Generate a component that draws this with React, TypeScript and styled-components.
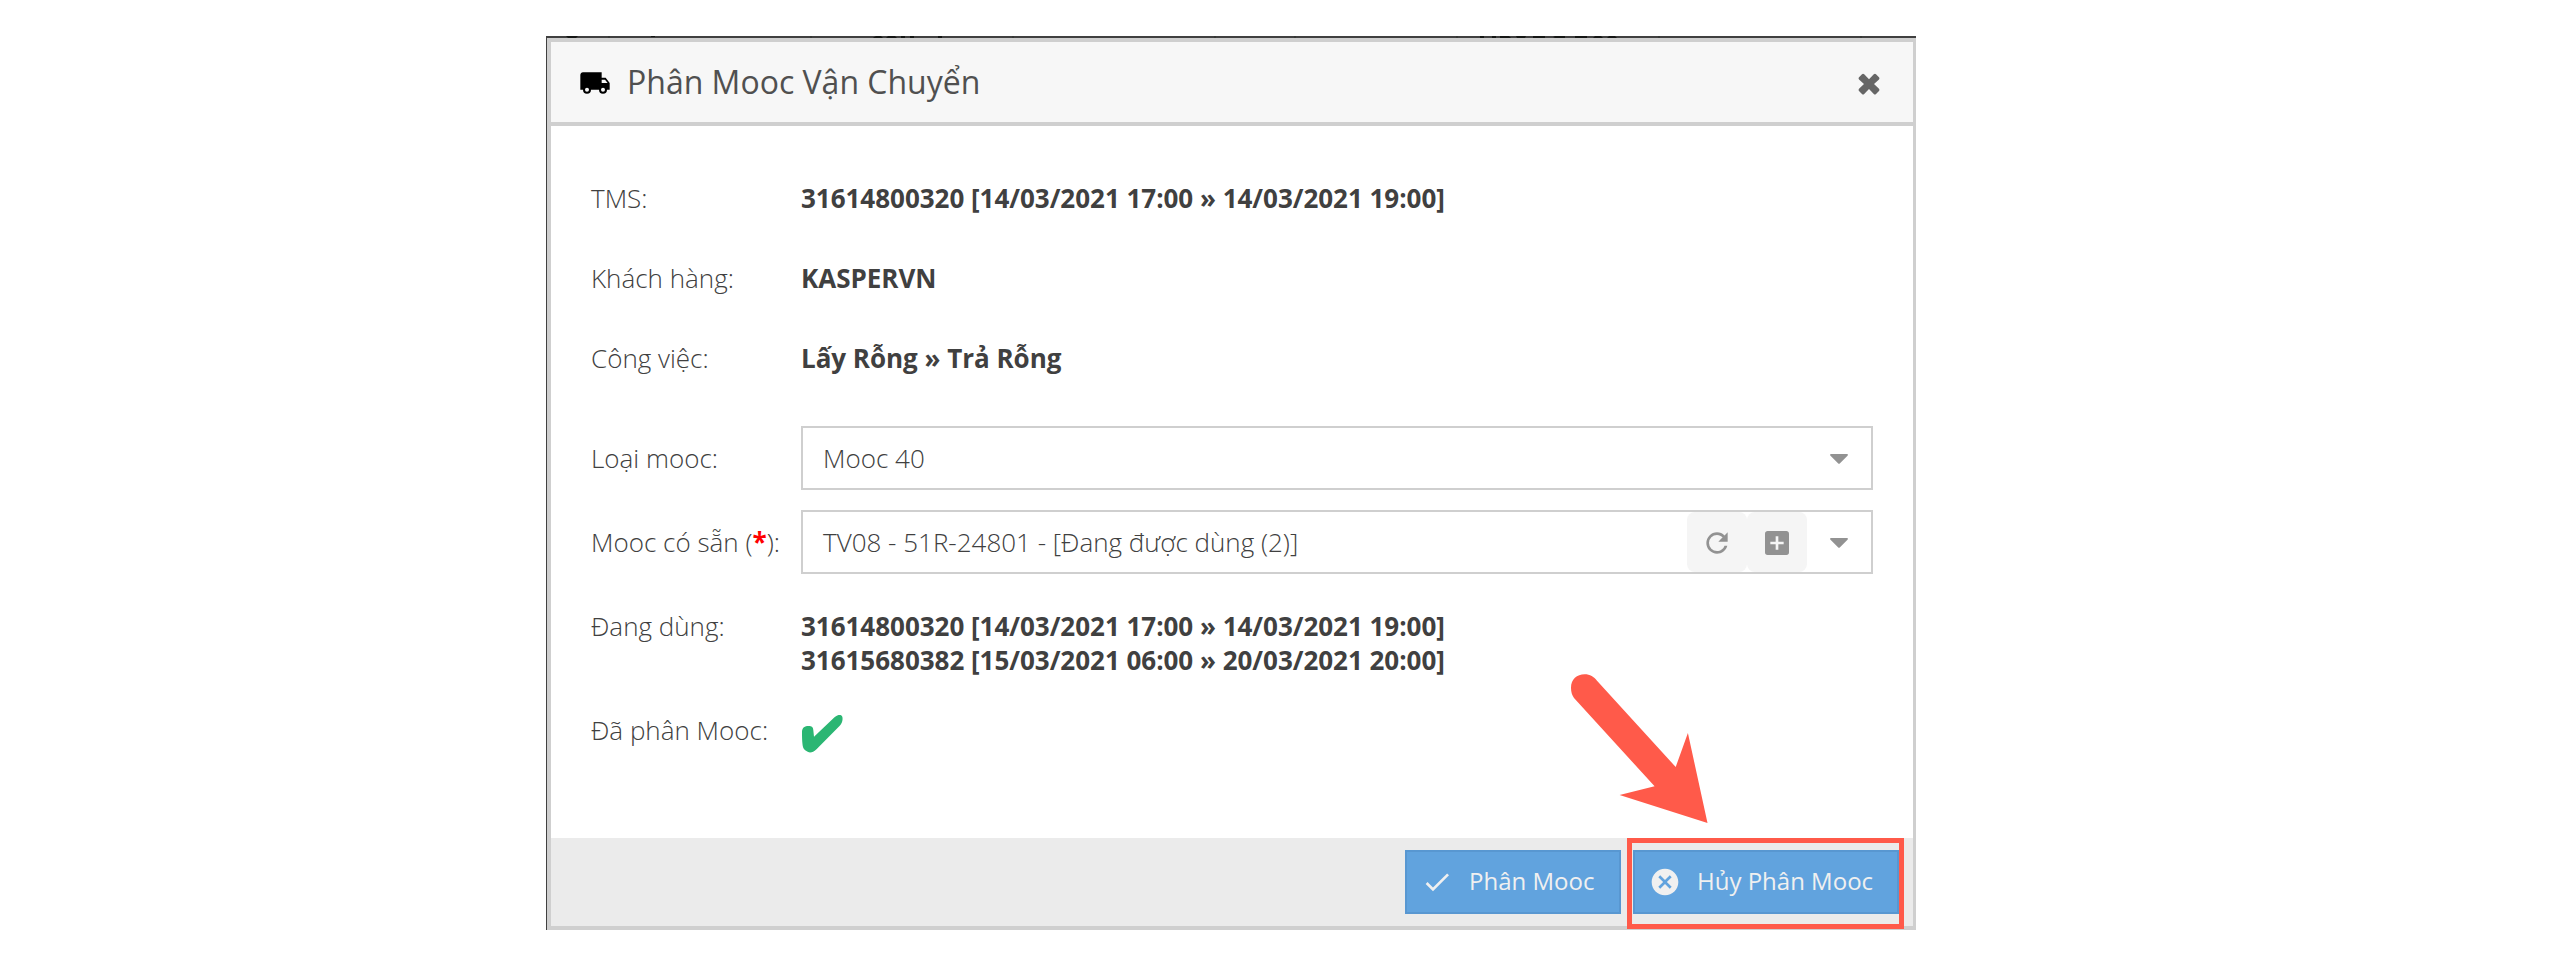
import React from "react";
import styled, { createGlobalStyle } from "styled-components";

const Global = createGlobalStyle`
  * { box-sizing: border-box; }
  body { margin: 0; background: #fff; font-family: "Open Sans", sans-serif; color: #404040; }
`;

const Page = styled.main`
  height: 962px;
  padding: 36px 0 0 546px;
  overflow: hidden;
`;

const Backdrop = styled.div`
  width: 1370px;
  height: 894px;
  padding: 0 0 0 1px;
  background: #404040;
`;

const Fragments = styled.svg`
  display: block;
  width: 1369px;
  height: 2px;
`;

const Dialog = styled.section`
  position: relative;
  height: 892px;
  display: flex;
  flex-direction: column;
  border: 4px solid #cfcfcf;
  border-right-width: 3px;
  background: #fff;
`;

const Header = styled.header`
  height: 84px;
  flex: none;
  display: flex;
  align-items: center;
  padding: 0 33px 0 28px;
  background: #f7f7f7;
  border-bottom: 4px solid #cfcfcf;
`;

const Title = styled.h1`
  flex: 1;
  margin: 0 0 0 16px;
  font-size: 32px;
  line-height: 44px;
  font-weight: 400;
  color: #505050;
`;

const Icon = styled.svg<{ $size?: number; $color?: string; $drop?: number }>`
  display: block;
  flex: none;
  width: ${(p) => p.$size ?? 32}px;
  height: ${(p) => p.$size ?? 32}px;
  margin-top: ${(p) => p.$drop ?? 0}px;
  fill: ${(p) => p.$color ?? "#929292"};
`;

const Body = styled.div`
  flex: 1;
  padding: 40px 40px 0;
`;

const Row = styled.div<{ $height: number }>`
  display: flex;
  height: ${(p) => p.$height}px;
  font-size: 26px;
  line-height: 34px;
`;

const Label = styled.div`
  width: 210px;
  flex: none;
  padding-top: 15px;
  font-weight: 300;
  white-space: nowrap;
`;

const Star = styled.span`
  color: #f00;
  font-weight: 700;
`;

const Value = styled.div`
  padding-top: 15px;
  font-weight: 700;
  letter-spacing: -0.025px;
  white-space: nowrap;
`;

const Select = styled.div`
  flex: 1;
  height: 64px;
  display: flex;
  align-items: center;
  border: 2px solid #cfcfcf;
  padding-left: 20px;
  font-weight: 300;
`;

const SelectText = styled.span`
  flex: 1;
`;

const Trigger = styled.span<{ $filled?: boolean }>`
  width: ${(p) => (p.$filled ? 60 : 64)}px;
  height: 60px;
  display: flex;
  align-items: center;
  justify-content: center;
  border-radius: 8px;
  background: ${(p) => (p.$filled ? "#f5f5f5" : "transparent")};
`;

const Footer = styled.footer`
  height: 88px;
  flex: none;
  display: flex;
  gap: 12px;
  padding: 12px 14px 0 0;
  justify-content: flex-end;
  background: #ebebeb;
`;

const Button = styled.button<{ $width: number }>`
  width: ${(p) => p.$width}px;
  height: 64px;
  display: flex;
  align-items: center;
  gap: 16px;
  padding: 0 0 0 14px;
  border: 2px solid #5897d1;
  background: #61a3de;
  color: #f0f0f0;
  font: 400 24px/32px "Open Sans", sans-serif;
  white-space: nowrap;
`;

const ButtonText = styled.span`
  padding-bottom: 2px;
`;

const Highlight = styled.div`
  position: absolute;
  left: 1076px;
  top: 796px;
  width: 277px;
  height: 91px;
  border: 5px solid #ff5a4a;
`;

const Arrow = styled.svg`
  position: absolute;
  left: 1019px;
  top: 632px;
  width: 138px;
  height: 150px;
  fill: #ff5a4a;
`;

const Caret = () => (
  <Icon viewBox="0 0 18 10" $size={18} $drop={2}>
    <path d="M1 0H17Q18.6 .4 17.5 1.8L10 9.3Q9 10.3 8 9.3L.5 1.8Q-.6 .4 1 0Z" />
  </Icon>
);

export default function App() {
  return (
    <Page>
      <Global />
      <Backdrop>
        <Fragments viewBox="0 0 1369 2">
          <path
            fill="#141614"
            d="M19 0H31L29 2H21ZM104 0H108V1H104ZM327 1L329 0H334L336 2H326ZM339 2L341 0H348L350 2ZM354 0H358V2H354ZM363 0H367V2H363ZM391 0H395V2H391ZM933 0H937V2H933ZM945 0H949V2H945ZM954 2L956 0H962L964 2ZM969 0H979L978 2H970ZM986 2V0H998V2ZM1006 1L1008 0H1018V2H1008ZM1028 0H1040V2H1028ZM1048 0H1054L1056 2H1046ZM1062 0H1068L1070 2H1060Z M953 0H962V2H953Z"
          />
          <path
            fill="#353735"
            d="M61 0H63V2H61ZM263 0H265V2H263ZM465 0H467V2H465ZM667 0H669V2H667ZM747 0H749V2H747ZM909 0H911V2H909ZM1111 0H1113V2H1111ZM1313 0H1315V2H1313Z"
          />
        </Fragments>
        <Dialog>
          <Header>
            <Icon viewBox="0 0 24 24" $color="#000" $drop={1}>
              <path d="M18,18.5A1.5,1.5 0 0,1 16.5,17A1.5,1.5 0 0,1 18,15.5A1.5,1.5 0 0,1 19.5,17A1.5,1.5 0 0,1 18,18.5M19.5,9.5L21.46,12H17V9.5M6,18.5A1.5,1.5 0 0,1 4.5,17A1.5,1.5 0 0,1 6,15.5A1.5,1.5 0 0,1 7.5,17A1.5,1.5 0 0,1 6,18.5M20,8H17V4H3C1.89,4 1,4.89 1,6V17H3A3,3 0 0,0 6,20A3,3 0 0,0 9,17H15A3,3 0 0,0 18,20A3,3 0 0,0 21,17H23V12L20,8Z" />
            </Icon>
            <Title>Phân Mooc Vận Chuyển</Title>
            <Icon viewBox="0 0 22 22" $size={22} $color="#666" $drop={3}>
              <path d="M1 5.5 4 1.2Q5 0.2 6.2 1.2L11 6.2 15.8 1.2Q17 0.2 18 1.2L21 4.2Q22 5.2 21 6.4L16 11 21 15.8Q22 17 21 18L18 21Q17 22 15.8 21L11 16 6.2 21Q5 22 4 21L1 18Q0 17 1 15.8L6 11 1 6.4Q0 5.2 1 4.2L4 1.2Z" />
            </Icon>
          </Header>
          <Body>
            <Row $height={80}>
              <Label>TMS:</Label>
              <Value>31614800320 [14/03/2021 17:00 » 14/03/2021 19:00]</Value>
            </Row>
            <Row $height={80}>
              <Label>Khách hàng:</Label>
              <Value>KASPERVN</Value>
            </Row>
            <Row $height={100}>
              <Label>Công việc:</Label>
              <Value>Lấy Rỗng » Trả Rỗng</Value>
            </Row>
            <Row $height={84}>
              <Label>Loại mooc:</Label>
              <Select>
                <SelectText>Mooc 40</SelectText>
                <Trigger>
                  <Caret />
                </Trigger>
              </Select>
            </Row>
            <Row $height={84}>
              <Label>
                Mooc có sẵn (<Star>*</Star>):
              </Label>
              <Select>
                <SelectText>TV08 - 51R-24801 - [Đang được dùng (2)]</SelectText>
                <Trigger $filled>
                  <Icon viewBox="0 0 24 24" $drop={1}>
                    <path d="M17.65,6.35C16.2,4.9 14.21,4 12,4A8,8 0 0,0 4,12A8,8 0 0,0 12,20C15.73,20 18.84,17.45 19.73,14H17.65C16.83,16.33 14.61,18 12,18A6,6 0 0,1 6,12A6,6 0 0,1 12,6C13.66,6 15.14,6.69 16.22,7.78L13,11H20V4L17.65,6.35Z" />
                  </Icon>
                </Trigger>
                <Trigger $filled>
                  <Icon viewBox="0 0 24 24" $drop={1}>
                    <path d="M17,13H13V17H11V13H7V11H11V7H13V11H17M19,3H5C3.89,3 3,3.89 3,5V19A2,2 0 0,0 5,21H19A2,2 0 0,0 21,19V5C21,3.89 20.1,3 19,3Z" />
                  </Icon>
                </Trigger>
                <Trigger>
                  <Caret />
                </Trigger>
              </Select>
            </Row>
            <Row $height={104}>
              <Label>Đang dùng:</Label>
              <Value>
                31614800320 [14/03/2021 17:00 » 14/03/2021 19:00]
                <br />
                31615680382 [15/03/2021 06:00 » 20/03/2021 20:00]
              </Value>
            </Row>
            <Row $height={64}>
              <Label>Đã phân Mooc:</Label>
              <Value>
                <Icon viewBox="0 0 42 40" $size={42} $color="#2bb673">
                  <path d="M1 18C1 13.5 4 12 7.5 12C11 12 12 13 12.3 16L13 22.8L33.5 3.2C36 1 38 .8 39.5 1C41.5 1.6 42 4 41.3 7C40.8 9.2 39.8 10.5 38.5 12L15.5 35.3C13 37.8 11.2 38.4 9 38.4C6.5 38 4 36.5 2.6 34.5C1.2 32 1 24 1 18Z" />
                </Icon>
              </Value>
            </Row>
          </Body>
          <Footer>
            <Button $width={216}>
              <Icon viewBox="0 0 24 24" $color="#f0f0f0">
                <path d="M21,7L9,19L3.5,13.5L4.91,12.09L9,16.17L19.59,5.59L21,7Z" />
              </Icon>
              <ButtonText>Phân Mooc</ButtonText>
            </Button>
            <Button $width={266}>
              <Icon viewBox="0 0 24 24" $color="#f0f0f0">
                <path d="M12,2C17.53,2 22,6.47 22,12C22,17.53 17.53,22 12,22C6.47,22 2,17.53 2,12C2,6.47 6.47,2 12,2M15.59,7L12,10.59L8.41,7L7,8.41L10.59,12L7,15.59L8.41,17L12,13.41L15.59,17L17,15.59L13.41,12L17,8.41L15.59,7Z" />
              </Icon>
              <ButtonText>Hủy Phân Mooc</ButtonText>
            </Button>
          </Footer>
          <Highlight />
          <Arrow viewBox="1570 674 138 150">
            <path d="M1571 688C1571 679 1577 674.3 1584.6 674.3C1590 674.3 1594 677 1597 680.7L1675.7 767L1687.9 733L1707.5 823L1619.6 795L1654.6 786.3L1574 698C1572 695 1571 692 1571 688Z" />
          </Arrow>
        </Dialog>
      </Backdrop>
    </Page>
  );
}
